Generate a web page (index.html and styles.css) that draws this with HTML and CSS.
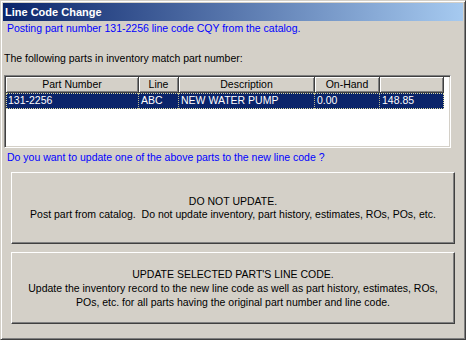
FILE: index.html
```html
<!DOCTYPE html>
<html lang="en">
<head>
    <meta charset="UTF-8">
    <title>Line Code Change</title>
    <link rel="stylesheet" href="styles.css">
</head>
<body>
    <div class="window">
        <div class="titlebar">Line Code Change</div>
        <div class="content">
            <p class="note">Posting part number 131-2256 line code CQY from the catalog.</p>
            <p class="label">The following parts in inventory match part number:</p>

            <div class="listview">
                <div class="list-head">
                    <div class="hcell">Part Number</div>
                    <div class="hcell">Line</div>
                    <div class="hcell">Description</div>
                    <div class="hcell">On-Hand</div>
                    <div class="hcell"></div>
                </div>
                <div class="list-row selected">
                    <div class="cell">131-2256</div>
                    <div class="cell">ABC</div>
                    <div class="cell">NEW WATER PUMP</div>
                    <div class="cell">0.00</div>
                    <div class="cell">148.85</div>
                </div>
            </div>

            <p class="note question">Do you want to update one of the above parts to the new line code ?</p>

            <button class="big-btn">DO NOT UPDATE.<br>Post part from catalog.&nbsp; Do not update inventory, part history, estimates, ROs, POs, etc.</button>
            <button class="big-btn second">UPDATE SELECTED PART'S LINE CODE.<br>Update the inventory record to the new line code as well as part history, estimates, ROs,<br>POs, etc. for all parts having the original part number and line code.</button>
        </div>
    </div>
</body>
</html>
```

FILE: styles.css
```css
body {
    margin: 0;
    padding: 0;
    font-family: "Liberation Sans", Arial, sans-serif;
    font-size: 10.5px;
    background: #d4d0c8;
}
.window {
    width: 466px;
    height: 340px;
    box-sizing: border-box;
    background: #d4d0c8;
    border: 1px solid;
    border-color: #d4d0c8 #404040 #404040 #d4d0c8;
    box-shadow: inset 1px 1px #ffffff, inset -1px -1px #808080;
    padding: 2px;
    display: flex;
    flex-direction: column;
}
.titlebar {
    height: 18px;
    line-height: 18px;
    padding-left: 2px;
    color: #fff;
    font-weight: bold;
    font-size: 11px;
    background: linear-gradient(to right, #0a246a, #a6caf0);
}
.content {
    display: flex;
    flex-direction: column;
    align-items: flex-start;
}
p {
    margin: 0;
    line-height: 13px;
}
.note {
    color: #0000ff;
    margin: 1px 0 0 4px;
}
.label {
    margin: 17px 0 0 1px;
}
.listview {
    margin: 10px 0 0 1px;
    width: 447px;
    height: 73px;
    box-sizing: border-box;
    background: #fff;
    border: 1px solid;
    border-color: #808080 #ffffff #ffffff #808080;
    box-shadow: inset 1px 1px #404040, inset -1px -1px #d4d0c8;
    padding: 1px;
}
.list-head, .list-row {
    display: grid;
    grid-template-columns: 133px 40px 136px 65px 64px;
    width: 438px;
}
.hcell {
    height: 16px;
    line-height: 15px;
    text-align: center;
    background: #d4d0c8;
    box-sizing: border-box;
    border-right: 1px solid #404040;
    border-bottom: 1px solid #404040;
    box-shadow: inset 1px 1px #ffffff, inset -1px -1px #808080;
}
.list-row {
    height: 16px;
    line-height: 15px;
}
.list-row.selected {
    background: #0a246a;
    color: #fff;
    outline: 1px dotted #d8d8a0;
    outline-offset: -1px;
}
.cell {
    padding-left: 2px;
    border-right: 1px dotted #b8b890;
    white-space: nowrap;
}
.question {
    margin-top: 3px;
}
.big-btn {
    font-family: "Liberation Sans", Arial, sans-serif;
    font-size: 10.5px;
    line-height: 13px;
    color: #000;
    background: #d4d0c8;
    width: 444px;
    height: 72px;
    margin: 8px 0 0 8px;
    padding: 0;
    box-sizing: border-box;
    border: 1px solid;
    border-color: #ffffff #404040 #404040 #ffffff;
    box-shadow: inset -1px -1px #808080;
    text-align: center;
}
.big-btn.second {
    line-height: 14px;
}
```
